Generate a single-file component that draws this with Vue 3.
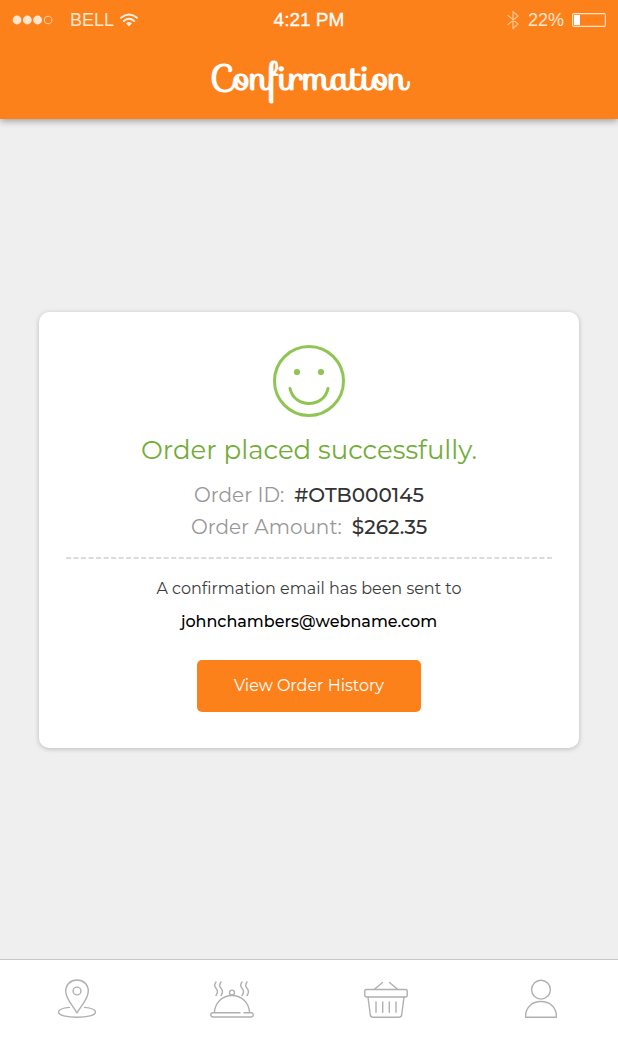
<template>
  <div class="page">
    <header class="header">
      <div class="status">
        <div class="carrier">
          <svg class="signal" viewBox="0 0 42 10">
            <circle cx="5" cy="5" r="4.4" />
            <circle cx="15.3" cy="5" r="4.4" />
            <circle cx="25.6" cy="5" r="4.4" />
            <circle class="empty" cx="36" cy="5" r="3.8" />
          </svg>
          <span>BELL</span>
          <svg class="wifi" viewBox="0 0 18 14">
            <path d="M1 4.8Q9 -1.8 17 4.8M3.9 8Q9 3.6 14.1 8" />
            <path class="dot" d="M6 10.2Q9 7.8 12 10.2L9 13.4Z" />
          </svg>
        </div>
        <span class="time">4:21 PM</span>
        <div class="power">
          <svg class="bluetooth" viewBox="0 0 12 20">
            <path d="M1 5.5L11 14L6 18.5V1.5L11 6L1 14.5" />
          </svg>
          <span>22%</span>
          <svg class="battery" viewBox="0 0 34 14">
            <rect class="shell" x="0.6" y="0.6" width="32.8" height="12.8" rx="1.5" />
            <rect class="level" x="2" y="2" width="6" height="10" />
          </svg>
        </div>
      </div>
      <h1>Confirmation</h1>
    </header>

    <main class="content">
      <section class="card">
        <svg class="smile" viewBox="0 0 72 72">
          <circle cx="36" cy="36" r="34.5" />
          <path d="M17 43.5C21 63.5 51 63.5 55 43.5" />
          <circle class="eye" cx="24" cy="27" r="3.1" />
          <circle class="eye" cx="48" cy="27" r="3.1" />
        </svg>
        <h2>Order placed successfully.</h2>
        <dl class="details">
          <div v-for="row in order" :key="row.label" class="row">
            <dt>{{ row.label }}</dt>
            <dd>{{ row.value }}</dd>
          </div>
        </dl>
        <svg class="divider">
          <line x1="0" y1="1" x2="100%" y2="1" pathLength="194" />
        </svg>
        <p class="note">A confirmation email has been sent to</p>
        <a class="email" :href="'mailto:' + email">{{ email }}</a>
        <button type="button" class="history">View Order History</button>
      </section>
    </main>

    <nav class="tabs">
      <a href="#location" aria-label="Location">
        <svg viewBox="0 0 44 44">
          <path d="M22 37C17.5 29 10.7 22.8 10.7 15.2C10.7 8.6 15.6 4 22 4S33.3 8.6 33.3 15.2C33.3 22.8 26.5 29 22 37Z" />
          <circle cx="22" cy="15" r="3.9" />
          <path d="M14.5 31.4C8 32 3.5 33.7 3.5 36.2C3.5 39.3 11.8 41.2 22 41.2S40.5 39.3 40.5 36.2C40.5 33.7 36 32 29.5 31.4" />
        </svg>
      </a>
      <a href="#menu" aria-label="Menu">
        <svg viewBox="0 0 44 44">
          <path d="M30 36.7H3Q0.8 36.7 0.8 38.8T3 41H41Q43.2 41 43.2 38.8T41 36.7H34" />
          <path d="M4.4 36.5C5 26.5 12.5 19.5 22 19.5S39 26.5 39.6 36.5" />
          <circle cx="22" cy="16.6" r="2.5" />
          <path d="M6 6C3.8 8.8 4.3 10.4 6 12.3S8.3 16.4 6 19.5M11 6C8.8 8.8 9.3 10.4 11 12.3S13.3 16.4 11 19.5M32 6C29.8 8.8 30.3 10.4 32 12.3S34.3 16.4 32 19.5M37 6C34.8 8.8 35.3 10.4 37 12.3S39.3 16.4 37 19.5" />
        </svg>
      </a>
      <a href="#basket" aria-label="Basket">
        <svg viewBox="0 0 44 44">
          <rect x="0.8" y="13.5" width="42.4" height="7.5" rx="1.5" />
          <path d="M4 21L6.3 39Q6.7 41.2 9 41.2H35Q37.3 41.2 37.7 39L40 21" />
          <path d="M10.5 13.3L18.5 6.5M33.5 13.3L25.5 6.5" />
          <path d="M12 26V36.2M18.7 26V36.2M25.3 26V36.2M32 26V36.2" />
        </svg>
      </a>
      <a href="#account" aria-label="Account">
        <svg viewBox="0 0 44 44">
          <circle cx="22" cy="13.7" r="9.4" />
          <path d="M6.6 41.3V40C6.6 31.2 13.4 25.5 22 25.5S37.4 31.2 37.4 40V41.3Z" />
        </svg>
      </a>
    </nav>
  </div>
</template>

<script setup>
import { ref } from 'vue'

const email = ref('johnchambers@webname.com')

const order = ref([
  { label: 'Order ID:', value: '#OTB000145' },
  { label: 'Order Amount:', value: '$262.35' }
])
</script>

<style>
body {
  margin: 0;
  background-color: #efefef;
}
</style>

<style scoped>
.page {
  display: flex;
  flex-direction: column;
  min-height: 100vh;
  background-color: #efefef;
  font-family: Montserrat, Inter, sans-serif;
}

svg {
  display: block;
  fill: none;
  stroke-linecap: round;
  stroke-linejoin: round;
}

.header {
  box-sizing: border-box;
  height: 119px;
  background-color: #fd811a;
  color: #fff;
  box-shadow: 0 2px 7px rgba(0, 0, 0, 0.35);
}

.status {
  display: grid;
  grid-template-columns: 1fr auto 1fr;
  align-items: center;
  height: 40px;
  padding: 0 12px;
  font-family: 'Liberation Sans', Arial, sans-serif;
  font-size: 18px;
  color: #ffe6d1;
}

.carrier,
.power {
  display: flex;
  align-items: center;
}

.signal {
  width: 42px;
  height: 10px;
  margin-right: 16px;
  fill: #ffe6d1;
}

.signal .empty {
  fill: none;
  stroke: #ffcfa6;
}

.wifi {
  width: 18px;
  height: 14px;
  margin-left: 6px;
  stroke: #fff0e2;
  stroke-width: 2;
}

.wifi .dot {
  fill: #fff0e2;
  stroke: none;
}

.time {
  -webkit-text-stroke: 0.3px #fff;
  font-size: 19px;
  color: #fff;
}

.power {
  justify-content: flex-end;
}

.bluetooth {
  width: 12px;
  height: 20px;
  margin-right: 9px;
  stroke: #ffc08a;
  stroke-width: 1.3;
}

.battery {
  width: 34px;
  height: 14px;
  margin-left: 8px;
}

.battery .shell {
  stroke: #ffe0c6;
  stroke-width: 1.2;
}

.battery .level {
  fill: #fff;
}

h1 {
  margin: 0;
  font-family: Sofia, Norican, Lato, cursive;
  font-size: 36px;
  font-weight: 700;
  line-height: 76px;
  text-align: center;
}

.content {
  display: flex;
  flex: 1;
  align-items: center;
  padding: 0 39px 18px;
}

.card {
  display: flex;
  flex: 1;
  flex-direction: column;
  align-items: center;
  padding: 33px 27px 36px;
  background-color: #fff;
  border-radius: 10px;
  box-shadow: 0 1px 5px rgba(0, 0, 0, 0.22);
}

.smile {
  width: 72px;
  height: 72px;
  stroke: #8fc552;
  stroke-width: 3;
}

.smile .eye {
  fill: #8fc552;
  stroke: none;
}

h2 {
  margin: 15px 0 11px;
  font-size: 26px;
  font-weight: 400;
  line-height: 36px;
  color: #74ac3a;
}

.details {
  margin: 0 0 14px;
  font-size: 20px;
  line-height: 32px;
}

.row {
  display: flex;
  justify-content: center;
  gap: 10px;
}

dt {
  font-weight: 400;
  color: #979797;
}

dd {
  margin: 0;
  font-weight: 500;
  color: #333;
}

.divider {
  width: 100%;
  height: 2px;
}

.divider line {
  stroke: #cfcfcf;
  stroke-width: 1.5;
  stroke-dasharray: 2 1;
  stroke-linecap: butt;
}

.note,
.email {
  margin: 0;
  font-size: 16px;
  line-height: 33px;
}

.note {
  margin-top: 13px;
  color: #3c3c3c;
}

.email {
  font-weight: 500;
  color: #000;
  text-decoration: none;
}

.history {
  margin-top: 22px;
  padding: 0 37px;
  border: none;
  border-radius: 5px;
  background-color: #fd811a;
  color: #fff;
  font-family: inherit;
  font-size: 16px;
  line-height: 52px;
  cursor: pointer;
}

.tabs {
  display: grid;
  grid-template-columns: repeat(4, 1fr);
  box-sizing: border-box;
  height: 81px;
  border-top: 1px solid #c8c8c8;
  background-color: #fff;
}

.tabs a {
  display: flex;
  align-items: center;
  justify-content: center;
}

.tabs svg {
  width: 44px;
  height: 44px;
  margin-bottom: 4px;
  stroke: #b0b0b0;
  stroke-width: 1.4;
}
</style>
